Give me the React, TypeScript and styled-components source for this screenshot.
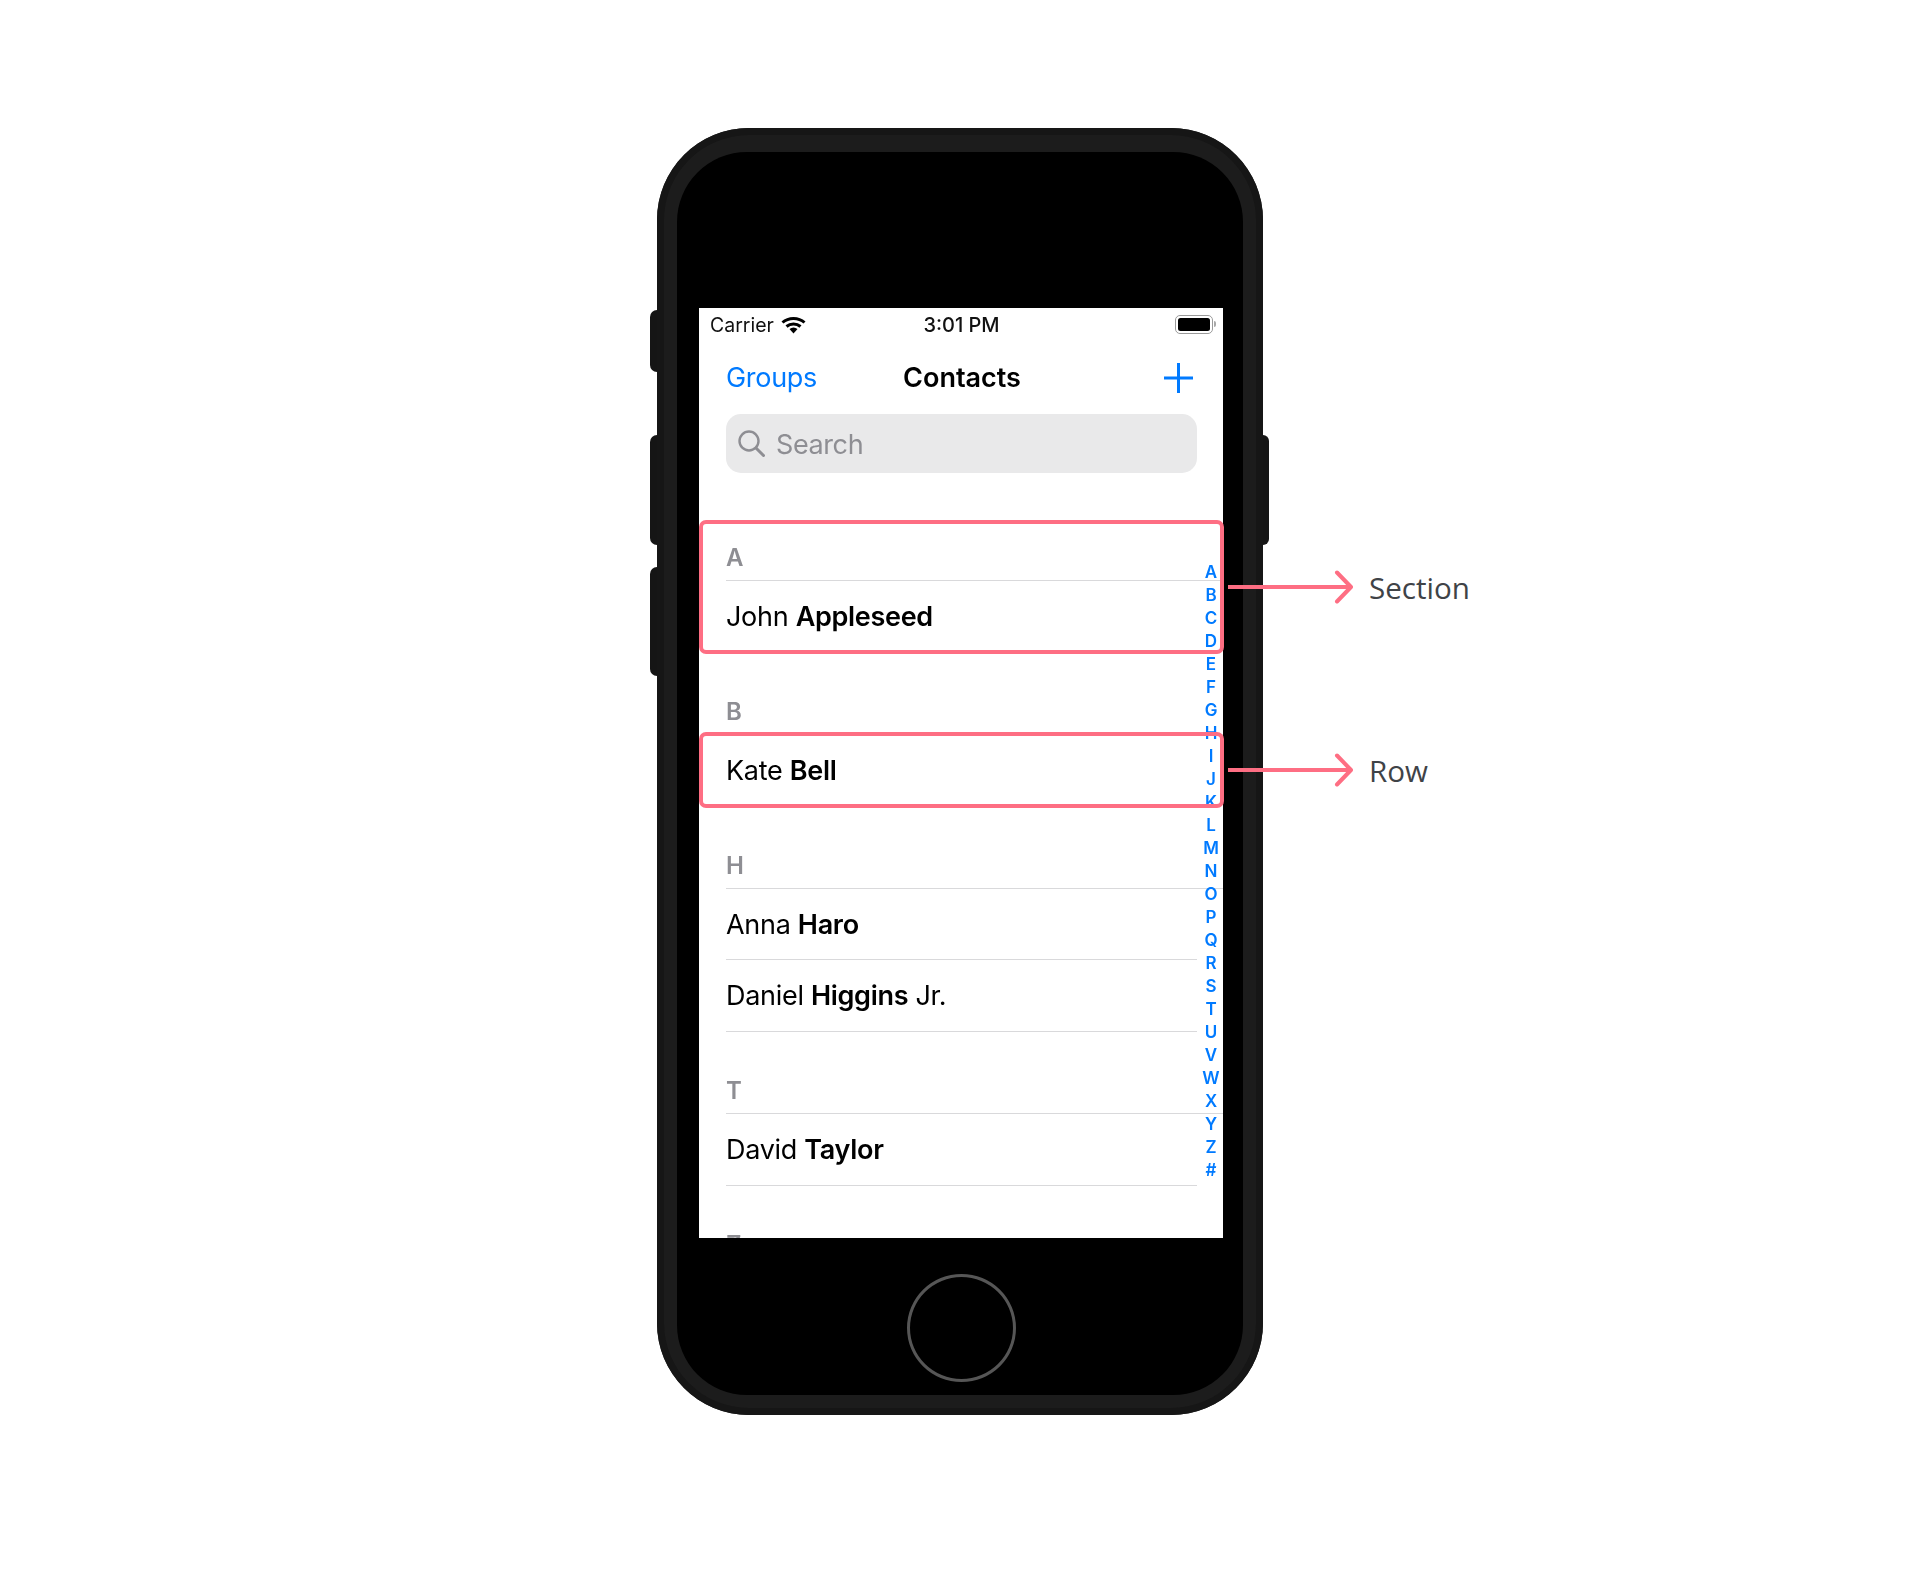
import React from "react";
import styled, { createGlobalStyle } from "styled-components";

const Global = createGlobalStyle`
  html, body { margin: 0; padding: 0; background: #fff; }
  * { box-sizing: border-box; }
`;

const UI = `Inter, "Liberation Sans", sans-serif`;
const PINK = "#fe6e83";
const BLUE = "#007aff";

const Page = styled.div`
  position: relative;
  width: 1920px;
  height: 1583px;
  padding-top: 128px;
  display: flex;
  justify-content: center;
  overflow: hidden;
  background: #fff;
  font-family: ${UI};
`;

const PhoneFrame = styled.div`
  position: relative;
  width: 606px;
  height: 1287px;
`;

const SideButton = styled.div<{ $side: "left" | "right"; $top: number; $height: number }>`
  position: absolute;
  top: ${(p) => p.$top}px;
  height: ${(p) => p.$height}px;
  width: 14px;
  background: #151515;
  ${(p) => (p.$side === "left" ? "left: -7px; border-radius: 7px 0 0 7px;" : "right: -6px; border-radius: 0 6px 6px 0;")}
`;

const Body = styled.div`
  position: relative;
  height: 100%;
  padding: 24px 20px 20px 20px;
  border-radius: 92px;
  background: #1c1c1c;
  box-shadow: inset 0 0 0 7px #161616;
`;

const Face = styled.div`
  height: 100%;
  padding: 156px 20px 0 22px;
  border-radius: 70px;
  background: #000;
  display: flex;
  flex-direction: column;
  align-items: center;
`;

const Screen = styled.div`
  position: relative;
  width: 524px;
  height: 930px;
  flex: none;
  overflow: hidden;
  background: #fff;
  color: #000;
`;

const ScreenContent = styled.div`
  position: relative;
  height: 100%;
  filter: blur(0.45px);
`;

const HomeButton = styled.div`
  width: 109px;
  height: 108px;
  margin-top: 36px;
  flex: none;
  border: 3px solid #565656;
  border-radius: 50%;
`;

const StatusBar = styled.div`
  height: 34px;
  padding: 0 10px 0 11px;
  display: grid;
  grid-template-columns: 1fr auto 1fr;
  align-items: center;
  font-size: 19.5px;
  font-weight: 400;
  color: #111;
`;

const StatusLeft = styled.div`
  display: flex;
  align-items: center;
  gap: 7px;
`;

const StatusTime = styled.div`
  font-size: 20px;
  font-weight: 500;
`;

const Battery = styled.div`
  justify-self: end;
  position: relative;
  width: 38px;
  height: 19px;
  margin-top: -1px;
  border: 1.5px solid #9a9a9a;
  border-radius: 5px;
  padding: 2px;
  display: flex;
`;

const BatteryFill = styled.div`
  flex: 1;
  background: #000;
  border-radius: 2.5px;
`;

const BatteryCap = styled.div`
  position: absolute;
  right: -4px;
  top: 5px;
  width: 2px;
  height: 6px;
  background: #a8a8a8;
  border-radius: 0 2px 2px 0;
`;

const NavBar = styled.div`
  height: 70px;
  margin-bottom: 2px;
  padding: 0 25px 0 27px;
  display: grid;
  grid-template-columns: 1fr auto 1fr;
  align-items: center;
  font-size: 27px;
`;

const NavLink = styled.div`
  color: ${BLUE};
  letter-spacing: -0.3px;
`;

const NavTitle = styled.div`
  font-weight: 600;
`;

const NavAction = styled.div`
  justify-self: end;
  margin: 1px 5px 0 0;
  display: flex;
`;

const SearchBar = styled.div`
  height: 59px;
  margin: 0 26px 0 27px;
  padding: 0 12px;
  display: flex;
  align-items: center;
  gap: 11px;
  border-radius: 15px;
  background: #e9e9ea;
  color: #8e8e93;
  font-size: 27px;
`;

const SearchLabel = styled.span`
  padding-top: 2px;
  letter-spacing: -0.4px;
`;

const List = styled.div`
  padding-top: 25px;
`;

const SectionHeader = styled.div`
  height: 82.5px;
  margin-left: 27px;
  padding-bottom: 8px;
  display: flex;
  align-items: flex-end;
  border-bottom: 1.5px solid #d9d9db;
  color: #8e8e93;
  font-size: 24px;
  font-weight: 600;
`;

const Row = styled.div`
  height: 71.5px;
  margin: 0 26px 0 27px;
  padding-top: 1px;
  display: flex;
  align-items: center;
  border-bottom: 1.5px solid #d9d9db;
  font-size: 27px;
  letter-spacing: -0.3px;
  white-space: pre;
  b {
    font-weight: 600;
  }
`;

const IndexBar = styled.div`
  position: absolute;
  top: 253px;
  right: 0;
  width: 24px;
  display: flex;
  flex-direction: column;
  align-items: center;
  color: ${BLUE};
  font-size: 17px;
  font-weight: 600;
`;

const IndexLetter = styled.div`
  height: 23.03px;
  line-height: 23px;
`;

const CalloutBox = styled.div<{ $top: number; $height: number }>`
  position: absolute;
  left: 699px;
  top: ${(p) => p.$top}px;
  width: 525px;
  height: ${(p) => p.$height}px;
  border: 4px solid ${PINK};
  border-radius: 7px;
`;

const Callout = styled.div<{ $top: number }>`
  position: absolute;
  left: 1228px;
  top: ${(p) => p.$top}px;
  display: flex;
  align-items: center;
  gap: 16px;
  height: 34px;
`;

const CalloutLabel = styled.div`
  font-family: "Open Sans", sans-serif;
  font-size: 29.6px;
  color: #3f4347;
`;

const Wifi = () => (
  <svg width="25" height="18" viewBox="0 0 25 18" fill="none">
    <path d="M1.5 6.5 C7.5 1 17.5 1 23.5 6.5" stroke="#000" strokeWidth="3" />
    <path d="M5.5 10.5 C9.5 7 15.5 7 19.5 10.5" stroke="#000" strokeWidth="3" />
    <path d="M8.5 13 C11 11 14 11 16.5 13 L12.5 17.5 Z" fill="#000" />
  </svg>
);

const Plus = () => (
  <svg width="29" height="30" viewBox="0 0 29 30" fill="none">
    <path d="M14.5 0 V30 M0 15 H29" stroke={BLUE} strokeWidth="3" />
  </svg>
);

const SearchIcon = () => (
  <svg width="27" height="27" viewBox="0 0 27 27" fill="none" stroke="#8e8e93">
    <circle cx="11" cy="11" r="9.5" strokeWidth="2.4" />
    <path d="M18 18 L25.5 25.5" strokeWidth="3" strokeLinecap="round" />
  </svg>
);

const Arrow = () => (
  <svg width="125" height="34" viewBox="0 0 125 34" fill="none" stroke={PINK} strokeWidth="4">
    <path d="M0 17 H122" />
    <path d="M109 2.5 L123 17 L109 31.5" strokeLinecap="round" strokeLinejoin="round" />
  </svg>
);

const contacts: [string, [string, string, string?][]][] = [
  ["A", [["John ", "Appleseed"]]],
  ["B", [["Kate ", "Bell"]]],
  ["H", [["Anna ", "Haro"], ["Daniel ", "Higgins", " Jr."]]],
  ["T", [["David ", "Taylor"]]],
  ["Z", []],
];

const letters = "ABCDEFGHIJKLMNOPQRSTUVWXYZ#".split("");

export default function App() {
  return (
    <Page>
      <Global />
      <PhoneFrame>
        <SideButton $side="left" $top={182} $height={62} />
        <SideButton $side="left" $top={307} $height={110} />
        <SideButton $side="left" $top={439} $height={109} />
        <SideButton $side="right" $top={307} $height={110} />
        <Body>
          <Face>
            <Screen>
              <ScreenContent>
                <StatusBar>
                  <StatusLeft>
                    Carrier
                    <Wifi />
                  </StatusLeft>
                  <StatusTime>3:01 PM</StatusTime>
                  <Battery>
                    <BatteryFill />
                    <BatteryCap />
                  </Battery>
                </StatusBar>
                <NavBar>
                  <NavLink>Groups</NavLink>
                  <NavTitle>Contacts</NavTitle>
                  <NavAction>
                    <Plus />
                  </NavAction>
                </NavBar>
                <SearchBar>
                  <SearchIcon />
                  <SearchLabel>Search</SearchLabel>
                </SearchBar>
                <List>
                  {contacts.map(([letter, rows]) => (
                    <section key={letter}>
                      <SectionHeader>{letter}</SectionHeader>
                      {rows.map(([first, last, suffix]) => (
                        <Row key={last}>
                          {first}
                          <b>{last}</b>
                          {suffix}
                        </Row>
                      ))}
                    </section>
                  ))}
                </List>
                <IndexBar>
                  {letters.map((l) => (
                    <IndexLetter key={l}>{l}</IndexLetter>
                  ))}
                </IndexBar>
              </ScreenContent>
            </Screen>
            <HomeButton />
          </Face>
        </Body>
      </PhoneFrame>
      <CalloutBox $top={520} $height={134} />
      <CalloutBox $top={732} $height={76} />
      <Callout $top={570}>
        <Arrow />
        <CalloutLabel>Section</CalloutLabel>
      </Callout>
      <Callout $top={753}>
        <Arrow />
        <CalloutLabel>Row</CalloutLabel>
      </Callout>
    </Page>
  );
}
